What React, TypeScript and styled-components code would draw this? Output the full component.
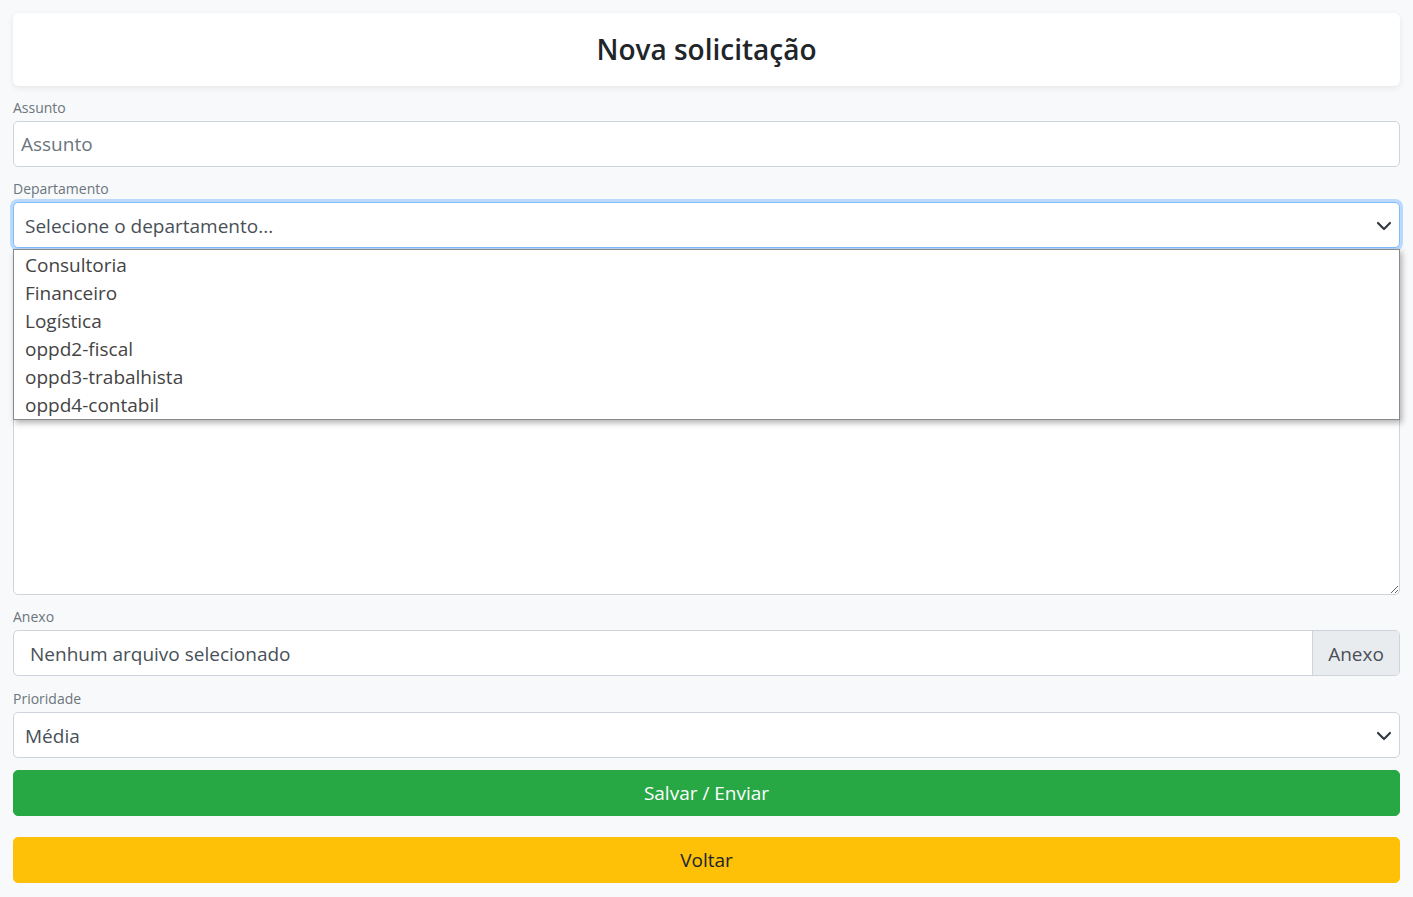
import { FC } from "react";
import styled, { createGlobalStyle } from "styled-components";

const GlobalStyle = createGlobalStyle`
  html, body {
    margin: 0;
    padding: 0;
    background: #f8f9fa;
    font-family: "Open Sans", "Noto Sans", sans-serif;
    color: #212529;
  }
  * { box-sizing: border-box; }
`;

const departamentos = [
  "Consultoria",
  "Financeiro",
  "Logística",
  "oppd2-fiscal",
  "oppd3-trabalhista",
  "oppd4-contabil",
];

const Chevron: FC = () => (
  <svg width="16" height="16" viewBox="0 0 16 16">
    <path
      d="M2 5l6 6 6-6"
      fill="none"
      stroke="#343a40"
      strokeWidth="2.2"
      strokeLinecap="round"
      strokeLinejoin="round"
    />
  </svg>
);

const App: FC = () => {
  return (
    <>
      <GlobalStyle />
      <Page>
        <HeaderCard>
          <Title>Nova solicitação</Title>
        </HeaderCard>

        <Form>
          <Group>
            <Label>Assunto</Label>
            <Input placeholder="Assunto" />
          </Group>

          <Group>
            <Label>Departamento</Label>
            <SelectWrap>
              <SelectBox focused>
                <span>Selecione o departamento...</span>
                <Chevron />
              </SelectBox>
              <Menu>
                {departamentos.map((d) => (
                  <MenuItem key={d}>{d}</MenuItem>
                ))}
              </Menu>
            </SelectWrap>
          </Group>

          {/* the label of the text area sits behind the open menu */}
          <Group>
            <LabelSpacer />
            <TextArea aria-label="Descrição" />
          </Group>

          <Group gap={13}>
            <Label>Anexo</Label>
            <FileBox>
              <FileName>Nenhum arquivo selecionado</FileName>
              <FileButton>Anexo</FileButton>
            </FileBox>
          </Group>

          <Group>
            <Label>Prioridade</Label>
            <SelectBox>
              <span>Média</span>
              <Chevron />
            </SelectBox>
          </Group>

          <Button variant="success">Salvar / Enviar</Button>
          <Button variant="warning">Voltar</Button>
        </Form>
      </Page>
    </>
  );
};

export default App;

const Page = styled.div`
  padding: 13px 13px 12px;
  display: flex;
  flex-direction: column;
`;

const HeaderCard = styled.div`
  background: #fff;
  height: 73px;
  border-radius: 6px;
  box-shadow: 0 2px 6px rgba(0, 0, 0, 0.08);
  display: flex;
  align-items: center;
  justify-content: center;
  padding-bottom: 1px;
`;

const Title = styled.h1`
  margin: 0;
  font-size: 28px;
  font-weight: 600;
  color: #212529;
`;

const Form = styled.div`
  margin-top: 12px;
  display: flex;
  flex-direction: column;
`;

const Group = styled.div<{ gap?: number }>`
  display: flex;
  flex-direction: column;
  margin-bottom: ${({ gap }) => gap ?? 12}px;
`;

const Label = styled.label`
  font-size: 14px;
  line-height: 20px;
  height: 20px;
  margin-bottom: 3px;
  color: #6c757d;
`;

const LabelSpacer = styled.div`
  height: 23px;
`;

const Input = styled.input`
  height: 46px;
  border: 1px solid #ced4da;
  border-radius: 5px;
  padding: 0 7px;
  font-size: 19px;
  font-family: inherit;
  color: #495057;
  background: #fff;
  outline: none;
  &::placeholder {
    color: #6c757d;
  }
`;

const SelectWrap = styled.div`
  position: relative;
`;

const SelectBox = styled.div<{ focused?: boolean }>`
  height: 46px;
  border: 1px solid ${({ focused }) => (focused ? "#80bdff" : "#ced4da")};
  box-shadow: ${({ focused }) =>
    focused ? "0 0 0 3px rgba(0, 123, 255, 0.25)" : "none"};
  border-radius: 5px;
  background: #fff;
  display: flex;
  align-items: center;
  justify-content: space-between;
  padding: 1px 7px 0 11px;
  font-size: 19px;
  color: #495057;
`;

const Menu = styled.div`
  position: absolute;
  top: 47px;
  left: 0;
  right: 0;
  background: #fff;
  border: 1px solid #8a8a8a;
  box-shadow: 2px 3px 6px rgba(0, 0, 0, 0.3);
  padding: 1px 0 0;
  z-index: 10;
`;

const MenuItem = styled.div`
  height: 28px;
  line-height: 28px;
  padding: 0 11px;
  font-size: 19px;
  color: #444;
`;

const TextArea = styled.textarea`
  height: 312px;
  border: 1px solid #ced4da;
  border-radius: 5px;
  background: #fff;
  outline: none;
  font-family: inherit;
  resize: vertical;
`;

const FileBox = styled.div`
  height: 46px;
  display: flex;
  border: 1px solid #ced4da;
  border-radius: 5px;
  background: #fff;
  overflow: hidden;
`;

const FileName = styled.div`
  flex: 1;
  display: flex;
  align-items: center;
  padding: 2px 16px 0;
  font-size: 19px;
  color: #495057;
`;

const FileButton = styled.div`
  width: 87px;
  display: flex;
  align-items: center;
  justify-content: center;
  padding-top: 2px;
  background: #e9ecef;
  border-left: 1px solid #ced4da;
  font-size: 19px;
  color: #495057;
`;

const Button = styled.button<{ variant: "success" | "warning" }>`
  height: 46px;
  width: 100%;
  border-radius: 5px;
  font-family: inherit;
  font-size: 19px;
  cursor: pointer;
  border: 1px solid
    ${({ variant }) => (variant === "success" ? "#28a745" : "#ffc107")};
  background: ${({ variant }) =>
    variant === "success" ? "#28a745" : "#ffc107"};
  color: ${({ variant }) => (variant === "success" ? "#fff" : "#212529")};
  margin-top: ${({ variant }) => (variant === "success" ? "0" : "21px")};
`;
